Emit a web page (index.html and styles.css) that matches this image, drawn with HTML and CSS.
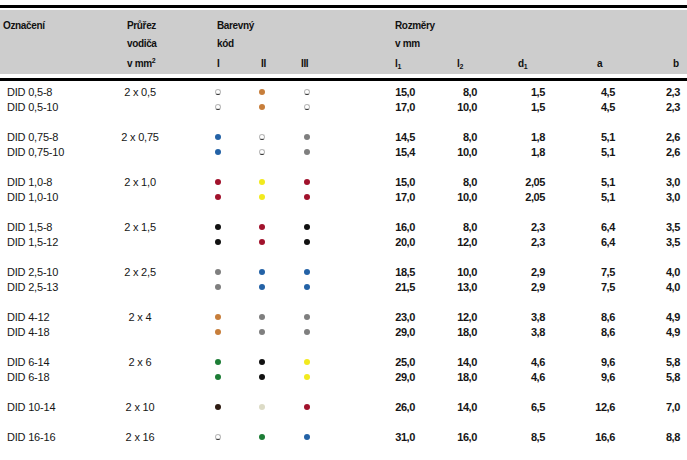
FILE: index.html
```html
<!DOCTYPE html>
<html lang="cs">
<head>
<meta charset="utf-8">
<title>DID</title>
<link rel="stylesheet" href="styles.css">
</head>
<body>
<div class="sheet">
  <div class="head">
    <div class="h c1">Označení</div>
    <div class="h c2">Průřez</div>
    <div class="h c3 span3">Barevný</div>
    <div class="h c6 span5">Rozměry</div>

    <div class="h c1"></div>
    <div class="h c2">vodiča</div>
    <div class="h c3 span3">kód</div>
    <div class="h c6 span5">v mm</div>

    <div class="h c1"></div>
    <div class="h c2">v mm<sup>2</sup></div>
    <div class="h c3">I</div>
    <div class="h c4">II</div>
    <div class="h c5">III</div>
    <div class="h c6">l<sub>1</sub></div>
    <div class="h c7">l<sub>2</sub></div>
    <div class="h c8">d<sub>1</sub></div>
    <div class="h c9">a</div>
    <div class="h c10">b</div>
  </div>

  <div class="body">
    <div class="group">
      <div class="cell name"><div class="ln">DID 0,5-8</div><div class="ln">DID 0,5-10</div></div>
      <div class="cell size"><div class="ln">2 x 0,5</div></div>
      <div class="cell d1c"><span class="dot white"></span><span class="dot white"></span></div>
      <div class="cell d2c"><span class="dot orange"></span><span class="dot orange"></span></div>
      <div class="cell d3c"><span class="dot white"></span><span class="dot white"></span></div>
      <div class="cell n1"><div class="ln">15,0</div><div class="ln">17,0</div></div>
      <div class="cell n2"><div class="ln">8,0</div><div class="ln">10,0</div></div>
      <div class="cell n3"><div class="ln">1,5</div><div class="ln">1,5</div></div>
      <div class="cell n4"><div class="ln">4,5</div><div class="ln">4,5</div></div>
      <div class="cell n5"><div class="ln">2,3</div><div class="ln">2,3</div></div>
    </div>

    <div class="group">
      <div class="cell name"><div class="ln">DID 0,75-8</div><div class="ln">DID 0,75-10</div></div>
      <div class="cell size"><div class="ln">2 x 0,75</div></div>
      <div class="cell d1c"><span class="dot blue"></span><span class="dot blue"></span></div>
      <div class="cell d2c"><span class="dot white"></span><span class="dot white"></span></div>
      <div class="cell d3c"><span class="dot grey"></span><span class="dot grey"></span></div>
      <div class="cell n1"><div class="ln">14,5</div><div class="ln">15,4</div></div>
      <div class="cell n2"><div class="ln">8,0</div><div class="ln">10,0</div></div>
      <div class="cell n3"><div class="ln">1,8</div><div class="ln">1,8</div></div>
      <div class="cell n4"><div class="ln">5,1</div><div class="ln">5,1</div></div>
      <div class="cell n5"><div class="ln">2,6</div><div class="ln">2,6</div></div>
    </div>

    <div class="group">
      <div class="cell name"><div class="ln">DID 1,0-8</div><div class="ln">DID 1,0-10</div></div>
      <div class="cell size"><div class="ln">2 x 1,0</div></div>
      <div class="cell d1c"><span class="dot red"></span><span class="dot red"></span></div>
      <div class="cell d2c"><span class="dot yellow"></span><span class="dot yellow"></span></div>
      <div class="cell d3c"><span class="dot red"></span><span class="dot red"></span></div>
      <div class="cell n1"><div class="ln">15,0</div><div class="ln">17,0</div></div>
      <div class="cell n2"><div class="ln">8,0</div><div class="ln">10,0</div></div>
      <div class="cell n3"><div class="ln">2,05</div><div class="ln">2,05</div></div>
      <div class="cell n4"><div class="ln">5,1</div><div class="ln">5,1</div></div>
      <div class="cell n5"><div class="ln">3,0</div><div class="ln">3,0</div></div>
    </div>

    <div class="group">
      <div class="cell name"><div class="ln">DID 1,5-8</div><div class="ln">DID 1,5-12</div></div>
      <div class="cell size"><div class="ln">2 x 1,5</div></div>
      <div class="cell d1c"><span class="dot black"></span><span class="dot black"></span></div>
      <div class="cell d2c"><span class="dot red"></span><span class="dot red"></span></div>
      <div class="cell d3c"><span class="dot black"></span><span class="dot black"></span></div>
      <div class="cell n1"><div class="ln">16,0</div><div class="ln">20,0</div></div>
      <div class="cell n2"><div class="ln">8,0</div><div class="ln">12,0</div></div>
      <div class="cell n3"><div class="ln">2,3</div><div class="ln">2,3</div></div>
      <div class="cell n4"><div class="ln">6,4</div><div class="ln">6,4</div></div>
      <div class="cell n5"><div class="ln">3,5</div><div class="ln">3,5</div></div>
    </div>

    <div class="group">
      <div class="cell name"><div class="ln">DID 2,5-10</div><div class="ln">DID 2,5-13</div></div>
      <div class="cell size"><div class="ln">2 x 2,5</div></div>
      <div class="cell d1c"><span class="dot grey"></span><span class="dot grey"></span></div>
      <div class="cell d2c"><span class="dot blue"></span><span class="dot blue"></span></div>
      <div class="cell d3c"><span class="dot blue"></span><span class="dot blue"></span></div>
      <div class="cell n1"><div class="ln">18,5</div><div class="ln">21,5</div></div>
      <div class="cell n2"><div class="ln">10,0</div><div class="ln">13,0</div></div>
      <div class="cell n3"><div class="ln">2,9</div><div class="ln">2,9</div></div>
      <div class="cell n4"><div class="ln">7,5</div><div class="ln">7,5</div></div>
      <div class="cell n5"><div class="ln">4,0</div><div class="ln">4,0</div></div>
    </div>

    <div class="group">
      <div class="cell name"><div class="ln">DID 4-12</div><div class="ln">DID 4-18</div></div>
      <div class="cell size"><div class="ln">2 x 4</div></div>
      <div class="cell d1c"><span class="dot orange"></span><span class="dot orange"></span></div>
      <div class="cell d2c"><span class="dot grey"></span><span class="dot grey"></span></div>
      <div class="cell d3c"><span class="dot grey"></span><span class="dot grey"></span></div>
      <div class="cell n1"><div class="ln">23,0</div><div class="ln">29,0</div></div>
      <div class="cell n2"><div class="ln">12,0</div><div class="ln">18,0</div></div>
      <div class="cell n3"><div class="ln">3,8</div><div class="ln">3,8</div></div>
      <div class="cell n4"><div class="ln">8,6</div><div class="ln">8,6</div></div>
      <div class="cell n5"><div class="ln">4,9</div><div class="ln">4,9</div></div>
    </div>

    <div class="group">
      <div class="cell name"><div class="ln">DID 6-14</div><div class="ln">DID 6-18</div></div>
      <div class="cell size"><div class="ln">2 x 6</div></div>
      <div class="cell d1c"><span class="dot green"></span><span class="dot green"></span></div>
      <div class="cell d2c"><span class="dot black"></span><span class="dot black"></span></div>
      <div class="cell d3c"><span class="dot yellow"></span><span class="dot yellow"></span></div>
      <div class="cell n1"><div class="ln">25,0</div><div class="ln">29,0</div></div>
      <div class="cell n2"><div class="ln">14,0</div><div class="ln">18,0</div></div>
      <div class="cell n3"><div class="ln">4,6</div><div class="ln">4,6</div></div>
      <div class="cell n4"><div class="ln">9,6</div><div class="ln">9,6</div></div>
      <div class="cell n5"><div class="ln">5,8</div><div class="ln">5,8</div></div>
    </div>

    <div class="group">
      <div class="cell name"><div class="ln">DID 10-14</div></div>
      <div class="cell size"><div class="ln">2 x 10</div></div>
      <div class="cell d1c"><span class="dot brown"></span></div>
      <div class="cell d2c"><span class="dot beige"></span></div>
      <div class="cell d3c"><span class="dot red"></span></div>
      <div class="cell n1"><div class="ln">26,0</div></div>
      <div class="cell n2"><div class="ln">14,0</div></div>
      <div class="cell n3"><div class="ln">6,5</div></div>
      <div class="cell n4"><div class="ln">12,6</div></div>
      <div class="cell n5"><div class="ln">7,0</div></div>
    </div>

    <div class="group">
      <div class="cell name"><div class="ln">DID 16-16</div></div>
      <div class="cell size"><div class="ln">2 x 16</div></div>
      <div class="cell d1c"><span class="dot white"></span></div>
      <div class="cell d2c"><span class="dot green"></span></div>
      <div class="cell d3c"><span class="dot blue"></span></div>
      <div class="cell n1"><div class="ln">31,0</div></div>
      <div class="cell n2"><div class="ln">16,0</div></div>
      <div class="cell n3"><div class="ln">8,5</div></div>
      <div class="cell n4"><div class="ln">16,6</div></div>
      <div class="cell n5"><div class="ln">8,8</div></div>
    </div>
  </div>
</div>
</body>
</html>
```

FILE: styles.css
```css
html, body {
  margin: 0;
  padding: 0;
  background: #ffffff;
}

body {
  font-family: "Liberation Sans", Arial, sans-serif;
  color: #161616;
  width: 687px;
}

.sheet {
  padding-top: 5px;
}

.head {
  border-top: 3px solid #000;
  margin-top: 0;
  position: relative;
  display: grid;
  grid-template-columns: 113px 97px 40px 40px 95px 55px 60px 70px 60px 57px;
  grid-auto-rows: 20px;
  background: #cdcdcd;
  background-clip: content-box;
  padding: 2px 0 0 0;
  box-sizing: content-box;
}

.head {
  padding-top: 2px;
}

.head::before {
  content: none;
}

.h {
  font-size: 10px;
  font-weight: bold;
  line-height: 20px;
  letter-spacing: -0.35px;
  color: #111;
  white-space: nowrap;
}

.head .h:nth-child(-n+4) {
  padding-top: 4px;
  line-height: 20px;
}

.head {
  grid-template-rows: 24px 20px 20px;
}

.head .h:nth-child(-n+4) {
  line-height: 16px;
  padding-top: 8px;
}

.h sup {
  font-size: 7px;
  line-height: 0;
  vertical-align: 4px;
}

.h sub {
  font-size: 7px;
  line-height: 0;
  vertical-align: -2px;
}

.span3 { grid-column: span 3; }
.span5 { grid-column: span 5; }

.c1 { padding-left: 3px; }
.c2 { padding-left: 14px; }
.c3 { padding-left: 7px; }
.c4 { padding-left: 11px; }
.c5 { padding-left: 11px; }
.c6 { padding-left: 10px; }
.c7 { padding-left: 17px; }
.c8 { padding-left: 18px; }
.c9 { padding-left: 27px; }
.c10 { padding-left: 43px; }

.body {
  margin-top: 4px;
  border-top: 3px solid #000;
  padding-top: 4px;
  display: flex;
  flex-direction: column;
  gap: 15px;
}

.group {
  display: grid;
  grid-template-columns: 113px 97px 40px 40px 95px 55px 60px 70px 60px 57px;
  font-size: 11px;
  line-height: 15px;
}

.ln {
  height: 15px;
  white-space: nowrap;
}

.name {
  padding-left: 7px;
  letter-spacing: -0.2px;
}

.size {
  text-align: center;
  padding-right: 43px;
  letter-spacing: -0.2px;
}

.d1c, .d2c, .d3c {
  display: flex;
  flex-direction: column;
}

.d1c { padding-left: 5px; }
.d2c { padding-left: 9px; }
.d3c { padding-left: 14px; }

.dot {
  display: block;
  width: 6px;
  height: 6px;
  border-radius: 50%;
  margin: 4px 0 5px 0;
  box-sizing: border-box;
}

.n1, .n2, .n3, .n4, .n5 {
  text-align: right;
  font-weight: bold;
  letter-spacing: -0.4px;
}

.n1 { padding-right: 25px; }
.n2 { padding-right: 23px; }
.n3 { padding-right: 25px; }
.n4 { padding-right: 15px; }
.n5 { padding-right: 7px; }

.white  { background: #ffffff; border: 1px solid #b8b8b8; border-bottom-color: #2a2a2a; }
.orange { background: #c77e3b; }
.blue   { background: #2462a6; }
.grey   { background: #7f7f7f; }
.red    { background: #a1122c; }
.yellow { background: #f2ea1e; }
.black  { background: #111111; }
.green  { background: #1d7d36; }
.brown  { background: #2e1c12; }
.beige  { background: #dcdbc6; }
```
